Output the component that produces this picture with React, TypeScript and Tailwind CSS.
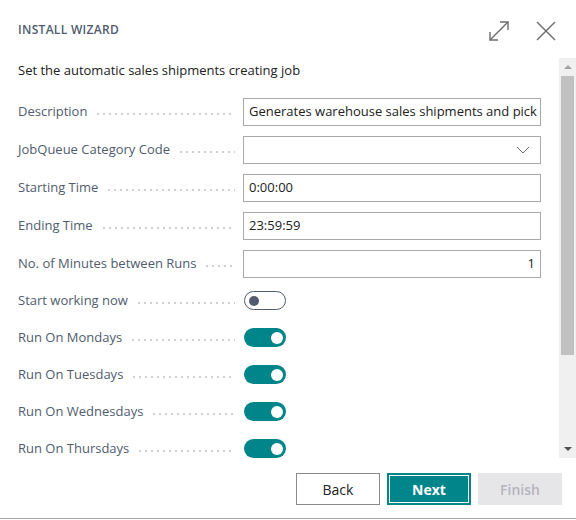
import React from "react";

const font = { fontFamily: '"Segoe UI", "Open Sans", "Noto Sans", sans-serif' };

const Leader = () => (
  <div className="flex-1 mx-[8px] h-[2px] mt-[4px] bg-[radial-gradient(circle,#cfcfcf_0.7px,transparent_1px)] bg-[length:6px_2px] bg-repeat-x" />
);

const Field: React.FunctionComponent<{ label: string; children: React.ReactNode }> = ({ label, children }) => (
  <div className="flex items-center">
    <div className="flex items-center w-[225px] shrink-0">
      <span className="text-[13px] text-[#505c6d] whitespace-nowrap">{label}</span>
      <Leader />
    </div>
    {children}
  </div>
);

const TextBox: React.FunctionComponent<{ value?: string; right?: boolean; select?: boolean }> = ({ value, right, select }) => (
  <div
    className={`w-[298px] h-[28px] border border-[#a9a9a9] bg-white flex items-center px-[5px] text-[13px] text-[#212121] overflow-hidden whitespace-nowrap ${
      right ? "justify-end" : "justify-between"
    }`}
  >
    <span>{value}</span>
    {select && (
      <svg width="14" height="8" viewBox="0 0 14 8" className="mr-[5px]">
        <path d="M1 1 L7 7 L13 1" fill="none" stroke="#6b6b6b" strokeWidth="1" />
      </svg>
    )}
  </div>
);

const Toggle: React.FunctionComponent<{ on?: boolean }> = ({ on }) =>
  on ? (
    <div className="ml-[1px] w-[42px] h-[19px] rounded-full bg-[#00858a] flex items-center justify-end px-[3px]">
      <div className="w-[12px] h-[12px] rounded-full bg-white" />
    </div>
  ) : (
    <div className="ml-[1px] w-[42px] h-[19px] rounded-full border border-[#505c6d] bg-white flex items-center px-[4px]">
      <div className="w-[10px] h-[10px] rounded-full bg-[#505c6d]" />
    </div>
  );

const App: React.FunctionComponent<{}> = () => {
  const days = ["Run On Mondays", "Run On Tuesdays", "Run On Wednesdays", "Run On Thursdays"];

  return (
    <div className="w-[576px] h-[520px] bg-white flex flex-col overflow-hidden" style={font}>
      <div className="h-[58px] flex items-start justify-between pl-[18px] pr-[20px] pt-[20px]">
        <h1 className="text-[12px] font-semibold text-[#505c6d] tracking-[0.3px] mt-[1px]">INSTALL WIZARD</h1>
        <div className="flex items-center gap-[26px]">
          <svg width="22" height="22" viewBox="0 0 22 22">
            <g fill="none" stroke="#6e6e6e" strokeWidth="1.4">
              <path d="M2 20 L20 2" />
              <path d="M12 2 H20 V10" />
              <path d="M2 12 V20 H10" />
            </g>
          </svg>
          <svg width="20" height="20" viewBox="0 0 20 20">
            <g fill="none" stroke="#6e6e6e" strokeWidth="1.4">
              <path d="M1 1 L19 19" />
              <path d="M19 1 L1 19" />
            </g>
          </svg>
        </div>
      </div>

      <div className="h-[400px] flex">
        <div className="flex-1 pl-[18px] pt-[4px]">
          <p className="text-[13px] text-[#212121] leading-[16px]">Set the automatic sales shipments creating job</p>
          <div className="flex flex-col gap-[10px] mt-[20px]">
            <Field label="Description">
              <TextBox value="Generates warehouse sales shipments and pick" />
            </Field>
            <Field label="JobQueue Category Code">
              <TextBox select />
            </Field>
            <Field label="Starting Time">
              <TextBox value="0:00:00" />
            </Field>
            <Field label="Ending Time">
              <TextBox value="23:59:59" />
            </Field>
            <Field label="No. of Minutes between Runs">
              <TextBox value="1" right />
            </Field>
          </div>
          <div className="flex flex-col mt-[4px]">
            <div className="h-[37px] flex items-center">
              <Field label="Start working now">
                <Toggle />
              </Field>
            </div>
            {days.map((d) => (
              <div key={d} className="h-[37px] flex items-center">
                <Field label={d}>
                  <Toggle on />
                </Field>
              </div>
            ))}
          </div>
        </div>
        <div className="w-[17px] bg-[#f0f0f0] flex flex-col items-center">
          <div className="h-[18px] flex items-center justify-center">
            <div className="w-0 h-0 border-l-[4px] border-r-[4px] border-b-[4px] border-l-transparent border-r-transparent border-b-[#a3a3a3]" />
          </div>
          <div className="w-[13px] h-[279px] bg-[#c1c1c1]" />
          <div className="flex-1" />
          <div className="h-[18px] flex items-center justify-center">
            <div className="w-0 h-0 border-l-[4px] border-r-[4px] border-t-[4px] border-l-transparent border-r-transparent border-t-[#505050]" />
          </div>
        </div>
      </div>

      <div className="flex justify-end gap-[7px] pr-[14px] pt-[15px]">
        <button className="w-[84px] h-[32px] border border-[#8a8a8a] bg-white text-[14px] text-[#212121]">Back</button>
        <button className="w-[84px] h-[32px] bg-[#00858a] p-[2px]">
          <div className="w-full h-full border border-white flex items-center justify-center text-[14px] font-bold text-white">
            Next
          </div>
        </button>
        <button className="w-[84px] h-[32px] bg-[#e6e6e9] text-[14px] font-semibold text-[#b4b4bd]">Finish</button>
      </div>
      <div className="flex-1" />
      <div className="h-[1px] bg-[#a9a9a9] mb-[1px]" />
    </div>
  );
};

export default App;
